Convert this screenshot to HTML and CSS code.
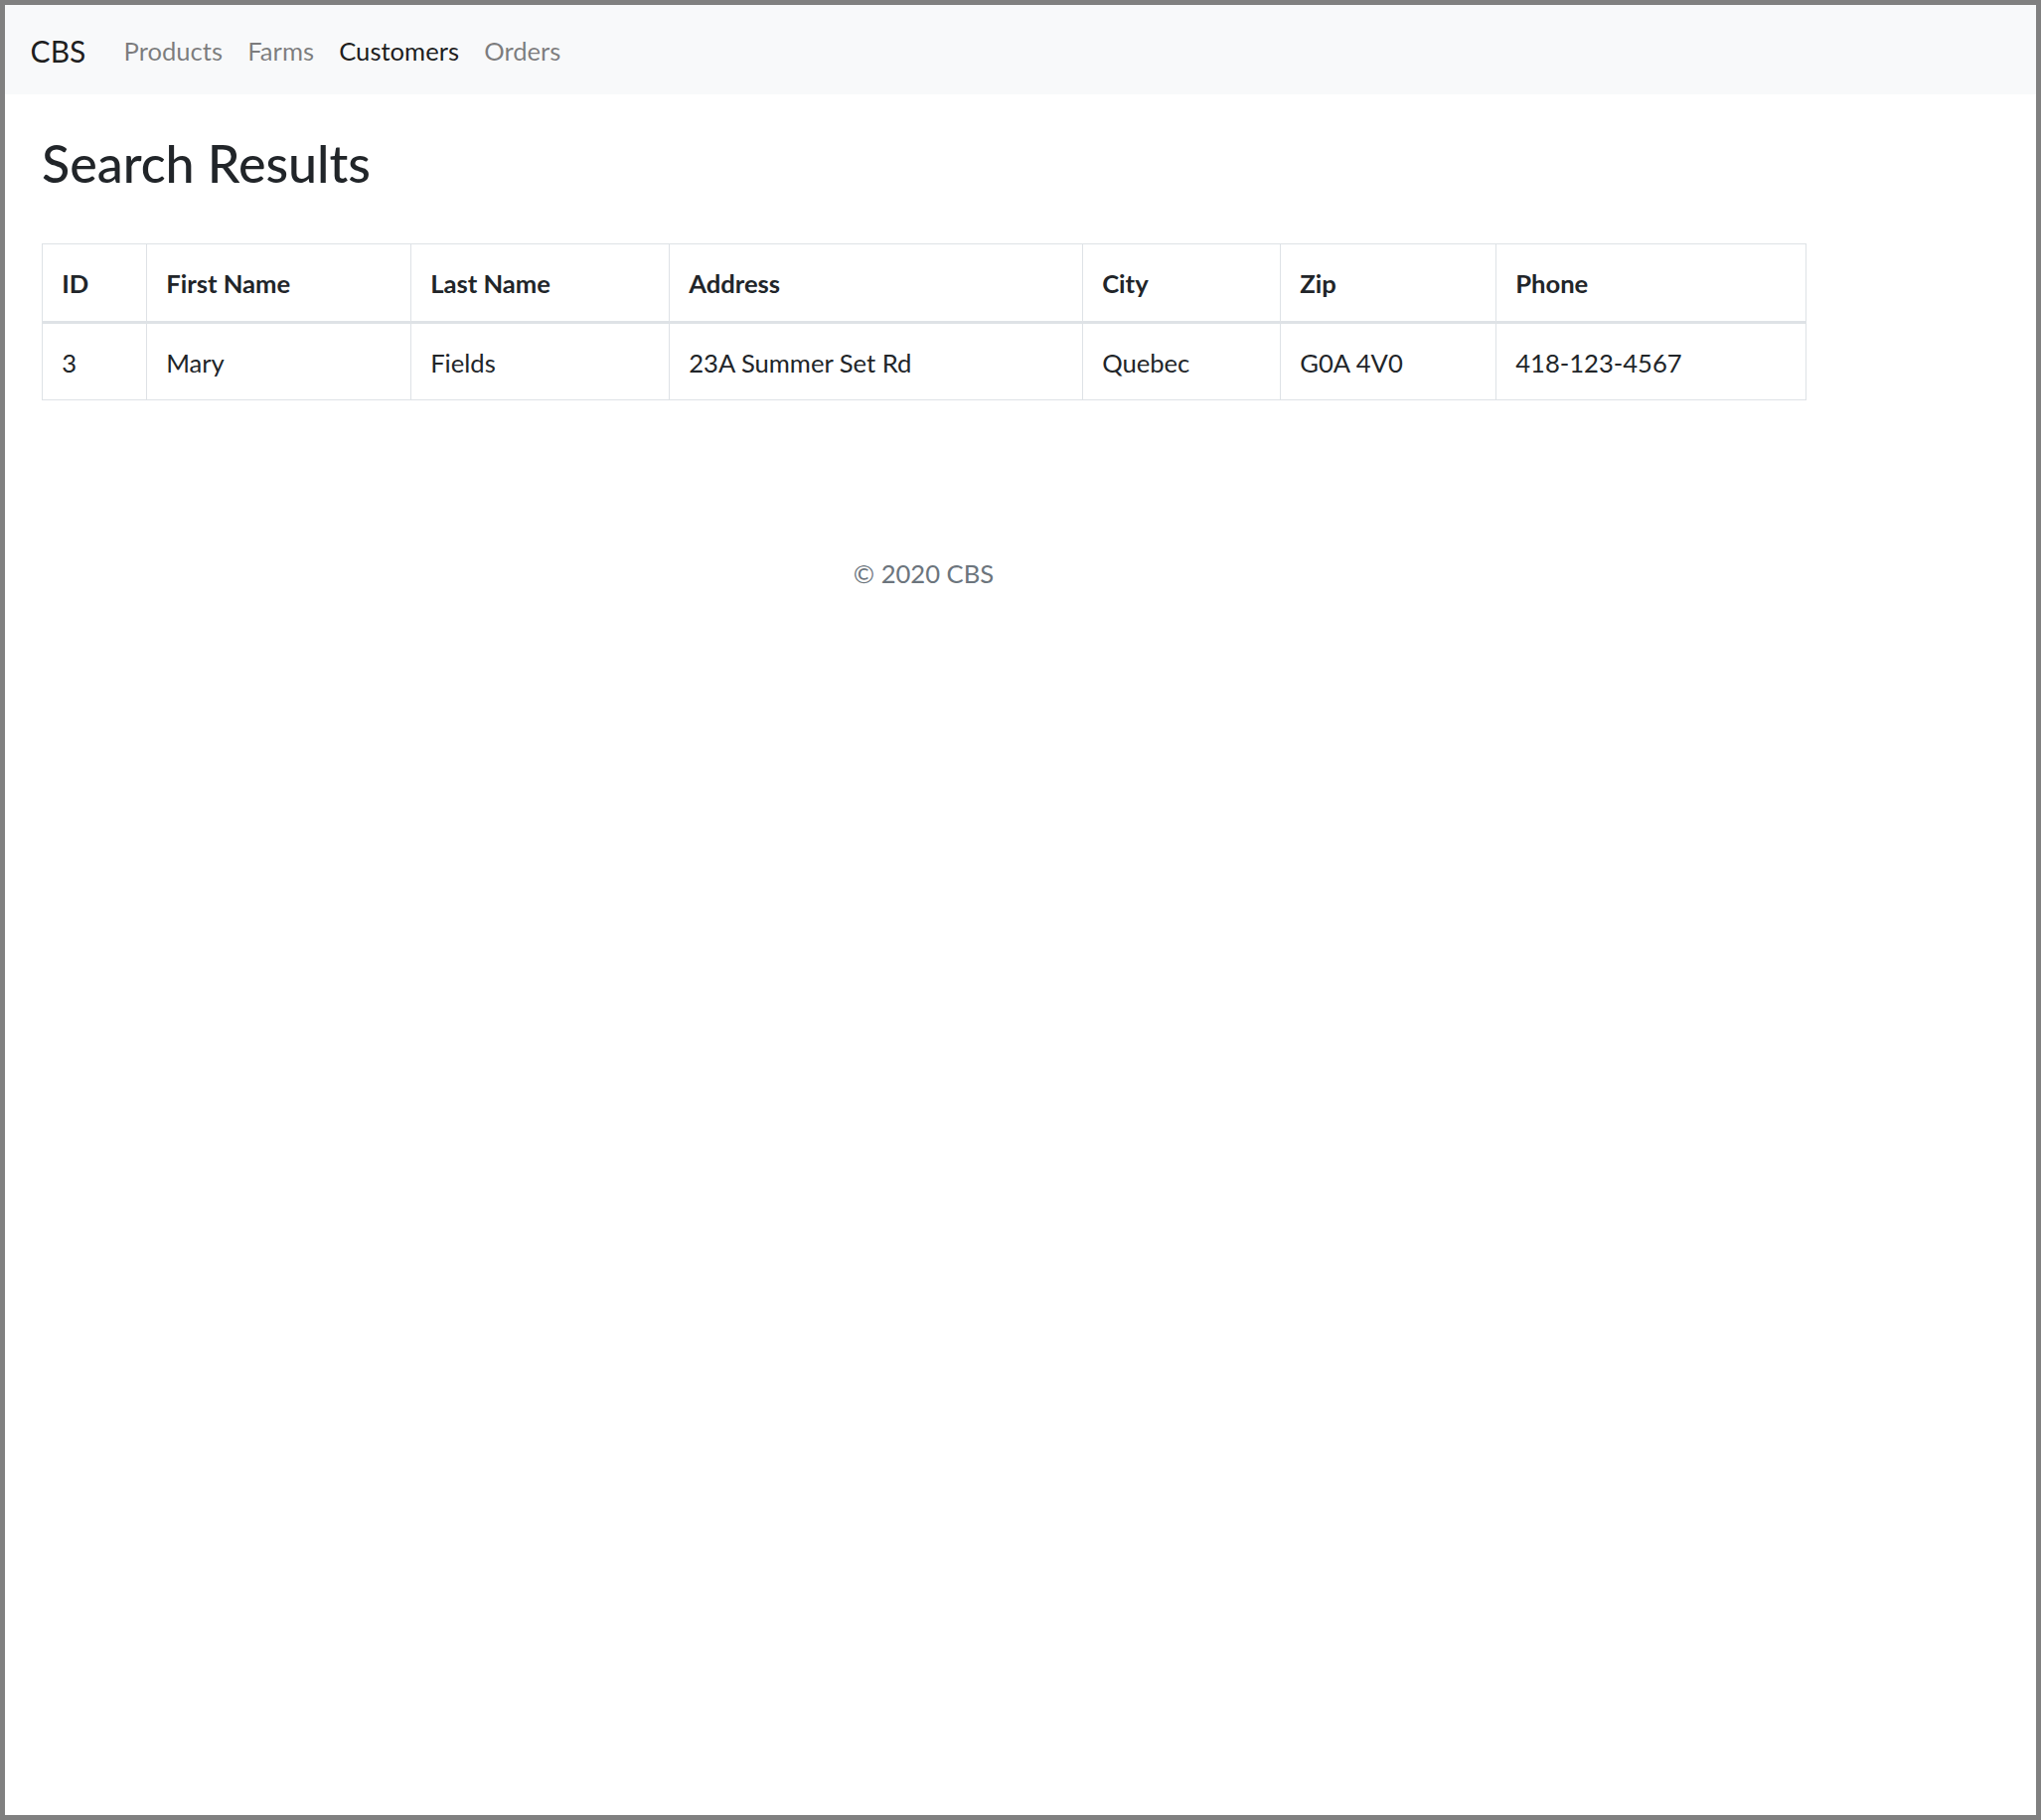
FILE: index.html
```html
<!DOCTYPE html>
<html lang="en">
<head>
<meta charset="utf-8">
<title>Search Results - CBS</title>
<link rel="stylesheet" href="styles.css">
</head>
<body>
<div class="frame">
  <header>
    <nav class="navbar">
      <a class="brand" href="#">CBS</a>
      <ul class="nav">
        <li><a class="nav-link" href="#">Products</a></li>
        <li><a class="nav-link" href="#">Farms</a></li>
        <li><a class="nav-link active" href="#">Customers</a></li>
        <li><a class="nav-link" href="#">Orders</a></li>
      </ul>
    </nav>
  </header>
  <div class="container">
    <main class="main">
      <h1 class="title">Search Results</h1>
      <table class="table">
        <thead>
          <tr>
            <th class="c-id">ID</th>
            <th class="c-first">First Name</th>
            <th class="c-last">Last Name</th>
            <th class="c-addr">Address</th>
            <th class="c-city">City</th>
            <th class="c-zip">Zip</th>
            <th class="c-phone">Phone</th>
          </tr>
        </thead>
        <tbody>
          <tr>
            <td>3</td>
            <td>Mary</td>
            <td>Fields</td>
            <td>23A Summer Set Rd</td>
            <td>Quebec</td>
            <td>G0A 4V0</td>
            <td>418-123-4567</td>
          </tr>
        </tbody>
      </table>
    </main>
    <footer class="footer">&copy; 2020 CBS</footer>
  </div>
</div>
</body>
</html>
```
FILE: styles.css
```css
* { box-sizing: border-box; }
html, body { margin: 0; padding: 0; }
body {
  font-family: Lato, "Open Sans", sans-serif;
  font-size: 25.6px;
  line-height: 1.5;
  color: #212529;
  background: #ffffff;
}
.frame {
  min-height: 1832px;
  border: 5px solid #808080;
  background: #fff;
}
.navbar {
  display: flex;
  align-items: center;
  height: 90px;
  padding: 2px 25.6px 0;
  background: #f8f9fa;
}
.brand {
  font-size: 30px;
  color: rgba(0,0,0,.9);
  text-decoration: none;
  margin-right: 25.6px;
  line-height: 1.5;
}
.nav {
  display: flex;
  list-style: none;
  margin: 0;
  padding: 0;
}
.nav-link {
  display: block;
  padding: 0 12.6px;
  color: rgba(0,0,0,.5);
  text-decoration: none;
}
.nav-link.active { color: rgba(0,0,0,.9); }
.container {
  padding: 0 37px;
  width: 1849px;
}
.main { padding-top: 38px; }
.title {
  margin: 0 0 50px;
  font-size: 52px;
  font-weight: 500;
  line-height: 1.2;
}
.table {
  width: 100%;
  border-collapse: collapse;
  table-layout: fixed;
}
.table th, .table td {
  border: 1px solid #dee2e6;
  padding: 20px 19.2px 18px;
  text-align: left;
  vertical-align: top;
}
.table th { font-weight: 700; border-bottom: 3px solid #dee2e6; }
.c-id { width: 105px; }
.c-first { width: 266px; }
.c-last { width: 260px; }
.c-addr { width: 416px; }
.c-city { width: 199px; }
.c-zip { width: 217px; }
.c-phone { width: 312px; }
.footer {
  margin-top: 155px;
  text-align: center;
  color: #6c757d;
}
```
